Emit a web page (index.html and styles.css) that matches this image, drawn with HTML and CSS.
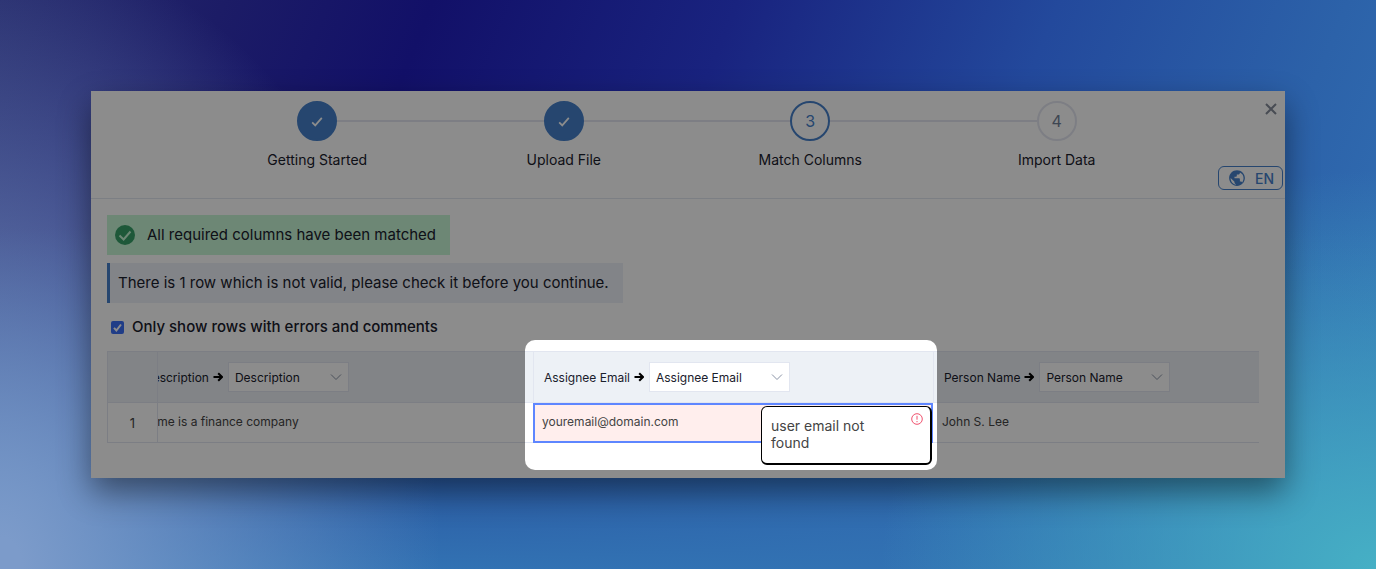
FILE: index.html
```html
<!DOCTYPE html>
<html lang="en">
<head>
<meta charset="utf-8">
<title>Match Columns</title>
<link rel="stylesheet" href="styles.css">
</head>
<body>
<main class="panel">
  <header class="header">
    <ol class="steps">
      <li class="step done"><span class="dot"><svg viewBox="0 0 16 16"><path d="M2.500 9.500 6 13 13.500 4.500"/></svg></span><span class="step-label">Getting Started</span></li>
      <li class="step done"><span class="dot"><svg viewBox="0 0 16 16"><path d="M2.500 9.500 6 13 13.500 4.500"/></svg></span><span class="step-label">Upload File</span></li>
      <li class="step active"><span class="dot">3</span><span class="step-label">Match Columns</span></li>
      <li class="step"><span class="dot">4</span><span class="step-label">Import Data</span></li>
    </ol>
    <div class="tools">
      <button class="close" type="button" aria-label="Close"><svg viewBox="0 0 12 12"><path d="M1 1 11 11M11 1 1 11"/></svg></button>
      <button class="lang" type="button">
        <svg viewBox="0 0 512 512"><path d="M256 32C132.300 32 32 132.300 32 256s100.300 224 224 224 224-100.300 224-224S379.700 32 256 32zm34 413c-130 20-218-80-216-190l110 108v22c0 24 20 44 44 44v18zm112-62c-6-18-23-30-42-30h-22v-66c0-12-10-22-22-22H184v-44h44c12 0 22-10 22-22v-44h44c24 0 44-20 44-44v-10c60 26 104 82 104 158 0 48-14 90-40 124z" fill-rule="evenodd"/></svg>
        <span>EN</span>
      </button>
    </div>
  </header>

  <section class="content">
    <p class="notice success">
      <svg viewBox="0 0 20 20"><circle cx="10" cy="10" r="10"/><path d="M4.500 10.500 8.600 14.500 15.500 6.500"/></svg>
      <span>All required columns have been matched</span>
    </p>
    <p class="notice info">There is 1 row which is not valid, please check it before you continue.</p>
    <label class="filter">
      <input type="checkbox" checked>
      <svg viewBox="0 0 13 13"><path d="M3 6.800 5.400 9.500 10 3.500"/></svg>
      <span>Only show rows with errors and comments</span>
    </label>

    <table class="grid">
      <colgroup><col class="c-index"><col><col class="c-email"><col class="c-person"></colgroup>
      <thead>
        <tr>
          <th class="index"></th>
          <th class="scrolled">
            <div class="map"><label for="s1">Description</label><svg class="arrow" viewBox="0 0 10 10"><path d="M.5 5H9M5.200 1.200 9 5 5.200 8.800"/></svg>
              <span class="pick pick-s"><select id="s1"><option>Description</option></select><svg viewBox="0 0 12 8"><path d="M1 1.500 6 6.500 11 1.500"/></svg></span></div>
          </th>
          <th class="email">
            <div class="map"><label for="s2">Assignee Email</label><svg class="arrow" viewBox="0 0 10 10"><path d="M.5 5H9M5.200 1.200 9 5 5.200 8.800"/></svg>
              <span class="pick pick-l"><select id="s2"><option>Assignee Email</option></select><svg viewBox="0 0 12 8"><path d="M1 1.500 6 6.500 11 1.500"/></svg></span></div>
          </th>
          <th class="email">
            <div class="map"><label for="s3">Person Name</label><svg class="arrow" viewBox="0 0 10 10"><path d="M.5 5H9M5.200 1.200 9 5 5.200 8.800"/></svg>
              <span class="pick pick-m"><select id="s3"><option>Person Name</option></select><svg viewBox="0 0 12 8"><path d="M1 1.500 6 6.500 11 1.500"/></svg></span></div>
          </th>
        </tr>
      </thead>
      <tbody>
        <tr>
          <td class="index">1</td>
          <td class="scrolled"><div class="shifted">Acme is a finance company</div></td>
          <td class="selected">youremail@domain.com
            <div class="spotlight"></div>
            <div class="comment">user email not found
              <svg viewBox="0 0 12 12"><circle cx="6" cy="6" r="5.300"/><path d="M6 2.800V6.700M6 8V9.200"/></svg>
            </div>
          </td>
          <td>John S. Lee</td>
        </tr>
      </tbody>
    </table>
  </section>
</main>
</body>
</html>
```
FILE: styles.css
```css
* { box-sizing: border-box; }

body {
  margin: 0;
  min-height: 100vh;
  padding: 91px;
  font-family: Inter, "Liberation Sans", sans-serif;
  color: #1a202c;
  background:
    radial-gradient(ellipse 36% 70% at 100% 100%, #46b0c5, rgba(70, 176, 197, 0)),
    radial-gradient(ellipse 32% 110% at 0% 100%, #7c9bca 5%, rgba(90, 115, 200, 0)),
    linear-gradient(0deg, #3272b3 0%, rgba(50, 110, 180, 0) 60%),
    linear-gradient(112deg, #262b6c 0%, #1c1c66 14%, #121068 27%, #19237f 46%, #23499c 66%, #2c62a9 84%, #3474b7 100%);
}

svg { display: block; fill: none; stroke: currentColor; }
button { font: inherit; background: none; cursor: pointer; }

.panel {
  position: relative;
  overflow: hidden;
  background: #fff;
  box-shadow: 0 14px 30px rgba(0, 0, 0, .45);
}

.header {
  display: flex;
  padding-left: 103px;
  border-bottom: 1px solid #e2e8f0;
}

.steps {
  flex: 1;
  display: grid;
  grid-template-columns: repeat(4, 1fr);
  margin: 0;
  padding: 10px 0 0;
  list-style: none;
}

.step {
  display: grid;
  grid-template-columns: 1fr 40px 1fr;
  align-content: start;
  align-items: center;
  row-gap: 8px;
}

.step::before,
.step::after { content: ""; height: 2px; background: #e4e6f0; grid-row: 1; }
.step::before { grid-column: 1; }
.step::after { grid-column: 3; }
.step:first-child::before,
.step:last-child::after { background: none; }

.dot {
  grid-area: 1 / 2;
  display: grid;
  place-items: center;
  height: 40px;
  border: 2px solid #e4e6f0;
  border-radius: 50%;
  font-size: 16px;
  color: #718096;
}
.dot svg { width: 14px; height: 14px; stroke-width: 2; }
.active .dot { border-color: #4580cb; color: #4580cb; }
.done .dot { border-color: #4580cb; background: #4580cb; color: #fff; }

.step-label {
  grid-area: 2 / 1 / 3 / 4;
  text-align: center;
  font-size: 14px;
  line-height: 21px;
}

.tools {
  flex: none;
  display: flex;
  flex-direction: column;
  align-items: flex-end;
  width: 105px;
  padding: 12px 2px 8px;
}

.close { margin: 0 6px 51px; padding: 0; border: 0; color: #848b99; }
.close svg { width: 12px; height: 12px; stroke-width: 2; }

.lang {
  display: flex;
  align-items: center;
  gap: 9px;
  height: 24px;
  padding: 0 8px 0 9px;
  border: 1px solid #4580cb;
  border-radius: 6px;
  color: #4580cb;
  font-size: 14px;
  font-weight: 500;
}
.lang svg { width: 18px; height: 18px; fill: currentColor; stroke: none; }

.content {
  display: flex;
  flex-direction: column;
  align-items: flex-start;
  gap: 8px;
  padding: 16px 26px 35px 16px;
}

.notice {
  display: flex;
  align-items: center;
  margin: 0;
  padding: 8px 14px 8px 8px;
  font-size: 15px;
  line-height: 24px;
}
.success { gap: 12px; background: #c6f6d5; }
.success svg { width: 20px; height: 20px; stroke: #c6f6d5; stroke-width: 2; }
.success circle { fill: #38a169; stroke: none; }
.info { border-left: 3px solid #4580cb; background: #edf0f7; }

.filter {
  display: grid;
  grid-template-columns: 13px auto;
  align-items: center;
  column-gap: 8px;
  margin: 4px 0 0 4px;
  font-size: 15px;
  font-weight: 500;
  line-height: 24px;
}
.filter input { grid-area: 1 / 1; appearance: none; width: 13px; height: 13px; margin: 0; border-radius: 2px; background: #3b6ff6; }
.filter svg { grid-area: 1 / 1; width: 13px; height: 13px; color: #fff; stroke-width: 2; z-index: 1; pointer-events: none; }

.grid {
  width: 100%;
  table-layout: fixed;
  border-spacing: 0;
  margin-top: 4px;
  font-size: 12px;
}
.c-index { width: 51px; }
.c-email { width: 400px; }
.c-person { width: 326px; }

th, td { padding: 0 9px; border-bottom: 1px solid #e2e6f0; text-align: left; font-weight: 400; }
th { height: 52px; border-top: 1px solid #e2e6f0; background: #edf1f6; }
td { height: 40px; padding-bottom: 2px; color: #444; }
.index { padding: 0; border-left: 1px solid #e2e6f0; border-right: 1px solid #e2e6f0; text-align: center; font-size: 13px; }
.email { border-left: 1px solid #e2e6f0; padding-left: 10px; }
.scrolled { padding-left: 0; overflow: hidden; white-space: nowrap; }
.scrolled .map { margin-left: -14px; }
.shifted { margin-left: -16px; }

.map { display: flex; align-items: center; }
.arrow { width: 10px; height: 10px; margin: 0 5px 0 4px; color: #000; stroke-width: 2; }

.pick { display: grid; grid-template-columns: 1fr 12px 6px; align-items: center; height: 30px; border: 1px solid #e2e6f0; background: #fff; }
.pick select { grid-area: 1 / 1 / 2 / 4; appearance: none; height: 28px; padding: 0 6px; border: 0; background: none; font: inherit; color: inherit; }
.pick svg { grid-area: 1 / 2; width: 12px; height: 8px; color: #8a93a6; pointer-events: none; }
.pick-s { width: 121px; }
.pick-m { width: 131px; }
.pick-l { width: 141px; }

.selected { position: relative; background: #ffeeed; outline: 2px solid #5e86ff; outline-offset: -2px; }

/* Dims everything outside the highlighted column */
.spotlight {
  position: absolute;
  inset: -63px -4px -28px -8px;
  border-radius: 10px;
  box-shadow: 0 0 0 2000px rgba(0, 0, 0, .45);
  pointer-events: none;
  z-index: 2;
}

.comment {
  position: absolute;
  top: 3px;
  right: 1px;
  z-index: 3;
  width: 171px;
  min-height: 59px;
  padding: 10px 50px 11px 9px;
  border: solid #000;
  border-width: 1px 2px 2px 1px;
  border-radius: 6px;
  background: #fff;
  font-size: 14px;
  line-height: 17px;
}
.comment svg { position: absolute; top: 6px; right: 7px; width: 12px; height: 12px; color: #f0526e; }
```
